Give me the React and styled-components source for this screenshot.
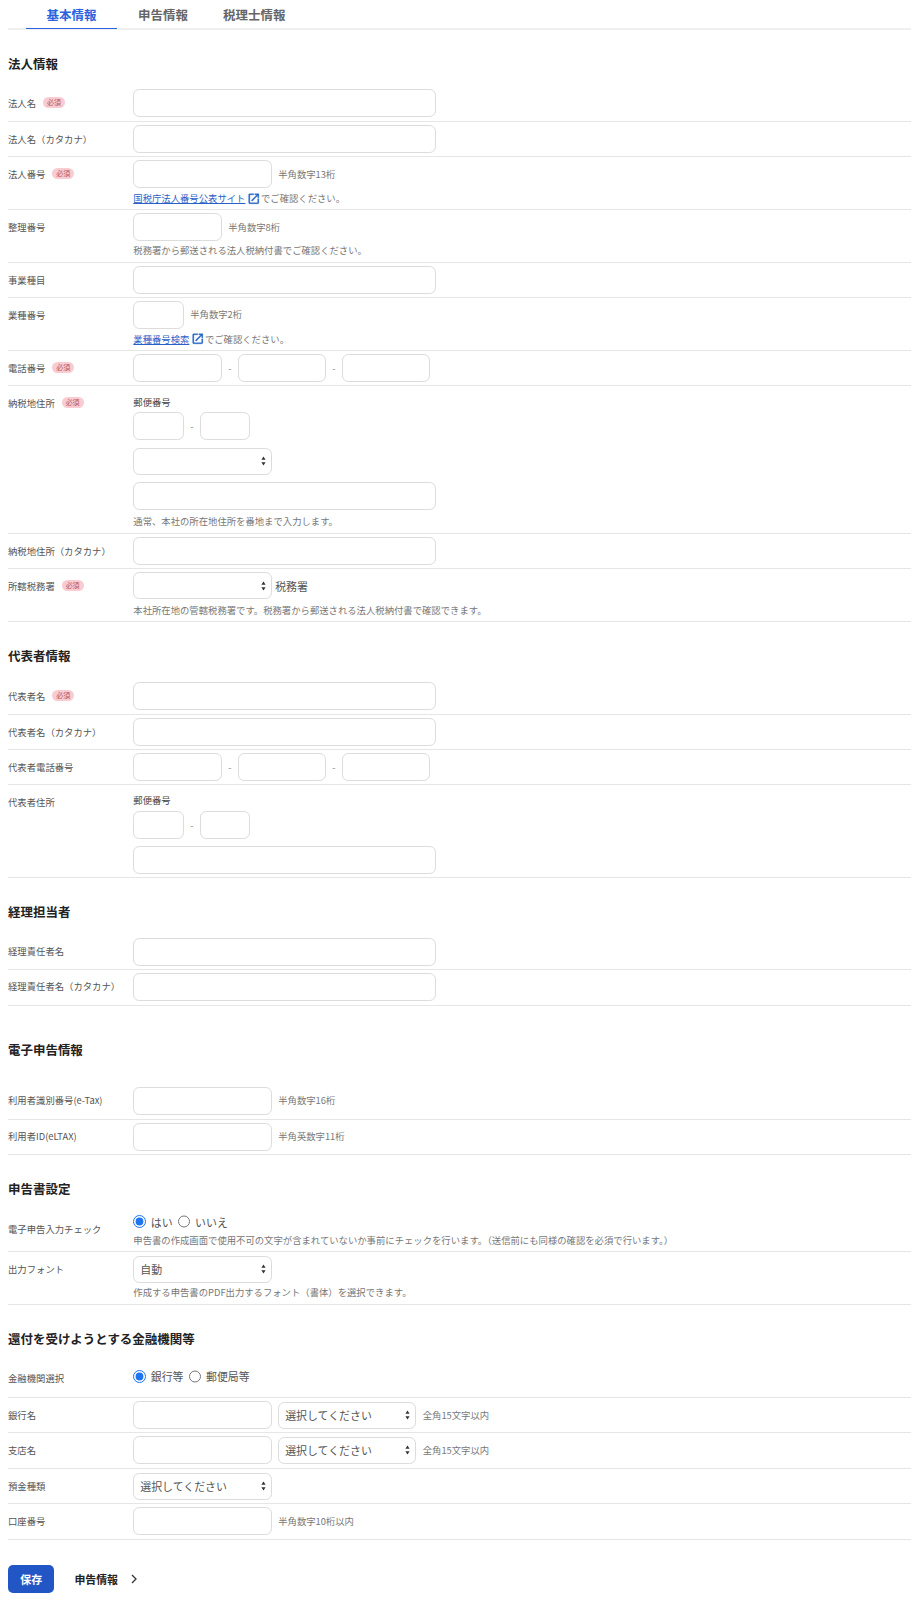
import React from "react";
import styled, { createGlobalStyle } from "styled-components";

const Global = createGlobalStyle`
  html, body { margin: 0; padding: 0; background: #fff; }
  body { font-family: "Noto Sans CJK JP", "Noto Sans", sans-serif; color: #555; }
  * { box-sizing: border-box; }
`;

const Page = styled.div`
  padding: 0 5px 0 8px;
`;

const TabBar = styled.nav`
  display: flex;
  height: 30px;
  padding-left: 18px;
  border-bottom: 2px solid #f0f0f0;
`;

const Tab = styled.div`
  height: 29.3px;
  padding: 6px 0 0;
  width: ${(p) => p.$w}px;
  text-align: ${(p) => (p.$active ? "center" : "left")};
  margin-left: ${(p) => p.$ml || 0}px;
  font-size: 12.48px;
  line-height: 19px;
  font-weight: 700;
  color: ${(p) => (p.$active ? "#2a62e0" : "#666")};
  border-bottom: ${(p) => (p.$active ? "1.5px solid #2a62e0" : "none")};
`;

const titlePadding = (p) => {
  if (p.$wide) return "35px 0 25px";
  if (p.$first) return "24.5px 0 13.7px";
  return "25px 0 13.7px";
};

const SectionTitle = styled.h2`
  margin: 0;
  padding: ${titlePadding};
  font-size: 12.48px;
  line-height: 18px;
  font-weight: 700;
  color: #222;
`;

const Row = styled.div`
  display: grid;
  grid-template-columns: 125.3px 1fr;
  padding: 3px 0 ${(p) => (p.$tall ? 4 : 3)}px;
  border-bottom: 1px solid #e6e6e6;
`;

const Label = styled.div`
  display: flex;
  align-items: center;
  gap: 7px;
  height: 15px;
  margin-top: ${(p) => (p.$low ? 7.5 : 6.8)}px;
  font-size: 9.36px;
  line-height: 15px;
  color: #555;
`;

const Badge = styled.span`
  display: inline-block;
  width: 21.8px;
  height: 11px;
  margin-top: -1px;
  border-radius: 6px;
  background: #f8ccd2;
  color: #b5565f;
  font-size: 7px;
  line-height: 11px;
  text-align: center;
`;

const Field = styled.div`
  display: flex;
  flex-direction: column;
  align-items: flex-start;
  min-width: 0;
`;

const Line = styled.div`
  display: flex;
  align-items: center;
  gap: ${(p) => p.$gap ?? 6.5}px;
`;

const Input = styled.input`
  display: block;
  width: ${(p) => p.$w || 302.4}px;
  height: 28px;
  padding: 0 8px;
  border: 1px solid #dcdcdc;
  border-radius: 6.24px;
  background: #fff;
  outline: none;
  font: inherit;
`;

const arrows =
  "url(\"data:image/svg+xml,%3Csvg xmlns='http://www.w3.org/2000/svg' width='5' height='10'%3E%3Cpath d='M2.5 0.5 L4.6 3.8 H0.4 Z M2.5 9.5 L4.6 6.2 H0.4 Z' fill='%23333'/%3E%3C/svg%3E\")";

const Select = styled.select`
  display: block;
  appearance: none;
  width: ${(p) => p.$w || 138.4}px;
  height: 27.3px;
  margin: 0.35px 0;
  padding: 0 12px 0 6px;
  border: 1px solid #dcdcdc;
  border-radius: 6.24px;
  background: #fff ${arrows} no-repeat right 5px center;
  outline: none;
  font-family: inherit;
  font-size: 10.92px;
  color: #555;
`;

const Dash = styled.span`
  font-size: 9.36px;
  color: #888;
  width: 16.3px;
  text-align: center;
`;

const Note = styled.span`
  font-size: 9.36px;
  line-height: 15px;
  color: #777;
`;

const Unit = styled.span`
  font-size: 10.92px;
  color: #555;
  margin-left: -3px;
`;

const Hint = styled.p`
  display: flex;
  align-items: center;
  margin: ${(p) => p.$top ?? 2}px 0 0;
  font-size: 9.36px;
  line-height: 16.3px;
  color: #777;
`;

const ExtLink = styled.a`
  color: #2a5fc8;
  text-decoration: underline;
`;

const ExtIcon = styled.svg`
  width: 13.5px;
  height: 13.5px;
  margin: 0 0.5px 0 1.5px;
  fill: #1d5fc4;
  stroke: #1d5fc4;
  stroke-width: 0.6;
`;

const ZipCaption = styled.div`
  padding-top: 2.5px;
  height: 22.8px;
  font-size: 9.36px;
  line-height: 20px;
  color: #444;
`;

const Stack = styled.div`
  display: flex;
  flex-direction: column;
  align-items: flex-start;
  gap: 7.3px;
`;

const RadioLine = styled.div`
  display: flex;
  align-items: center;
  height: ${(p) => (p.$loose ? 17 : 15)}px;
  margin: ${(p) => (p.$loose ? "3.5px 0 9.3px" : "0")};
`;

const RadioLabel = styled.label`
  display: inline-flex;
  align-items: center;
  margin-right: 5px;
  font-size: 10.92px;
  color: #555;
`;

const Radio = styled.input`
  width: 12.5px;
  height: 12.5px;
  margin: 0 5px 0 0;
  accent-color: #1f75f0;
`;

const Footer = styled.div`
  display: flex;
  align-items: center;
  margin-top: 24.7px;
`;

const SaveButton = styled.button`
  width: 46.4px;
  height: 28px;
  border: none;
  border-radius: 5px;
  background: #2356c5;
  color: #fff;
  font-family: inherit;
  font-size: 10.92px;
  font-weight: 700;
`;

const NextLink = styled.div`
  display: flex;
  align-items: center;
  gap: 13px;
  margin-left: 20px;
  font-size: 10.92px;
  font-weight: 700;
  color: #222;
`;

const Chevron = styled.svg`
  width: 6px;
  height: 10px;
  fill: none;
  stroke: #333;
  stroke-width: 1.3;
`;

const Required = () => <Badge>必須</Badge>;

const RowLabel = ({ children, required, low }) => (
  <Label $low={low}>
    {children}
    {required && <Required />}
  </Label>
);

const External = () => (
  <ExtIcon viewBox="0 0 24 24">
    <path d="M19 19H5V5h7V3H5a2 2 0 0 0-2 2v14a2 2 0 0 0 2 2h14c1.1 0 2-.9 2-2v-7h-2v7zM14 3v2h3.59l-9.83 9.83 1.41 1.41L19 6.41V10h2V3h-7z" />
  </ExtIcon>
);

const TelInputs = () => (
  <Line $gap={0}>
    <Input $w={88.4} />
    <Dash>-</Dash>
    <Input $w={87.7} />
    <Dash>-</Dash>
    <Input $w={87.7} />
  </Line>
);

const ZipInputs = () => (
  <Line $gap={0}>
    <Input $w={50.4} />
    <Dash>-</Dash>
    <Input $w={49.7} />
  </Line>
);

const TextRow = ({ label, required, tall }) => (
  <Row $tall={tall}>
    <RowLabel required={required}>{label}</RowLabel>
    <Field>
      <Input />
    </Field>
  </Row>
);

const NoteRow = ({ label, w = 138.4, note, tall }) => (
  <Row $tall={tall}>
    <RowLabel>{label}</RowLabel>
    <Field>
      <Line>
        <Input $w={w} />
        <Note>{note}</Note>
      </Line>
    </Field>
  </Row>
);

const BankRow = ({ label, tall }) => (
  <Row $tall={tall}>
    <RowLabel>{label}</RowLabel>
    <Field>
      <Line>
        <Input $w={138.4} />
        <Select $w={138}>
          <option>選択してください</option>
        </Select>
        <Note>全角15文字以内</Note>
      </Line>
    </Field>
  </Row>
);

export default function App() {
  return (
    <Page>
      <Global />
      <TabBar>
        <Tab $active $w={91}>基本情報</Tab>
        <Tab $ml={21} $w={85}>申告情報</Tab>
        <Tab $w={70}>税理士情報</Tab>
      </TabBar>

      <SectionTitle $first>法人情報</SectionTitle>
      <TextRow label="法人名" required tall />
      <TextRow label="法人名（カタカナ）" />
      <Row>
        <RowLabel required>法人番号</RowLabel>
        <Field>
          <Line>
            <Input $w={138.4} />
            <Note>半角数字13桁</Note>
          </Line>
          <Hint>
            <ExtLink>国税庁法人番号公表サイト</ExtLink>
            <External />
            でご確認ください。
          </Hint>
        </Field>
      </Row>
      <Row>
        <RowLabel>整理番号</RowLabel>
        <Field>
          <Line>
            <Input $w={88.4} />
            <Note>半角数字8桁</Note>
          </Line>
          <Hint $top={1}>税務署から郵送される法人税納付書でご確認ください。</Hint>
        </Field>
      </Row>
      <TextRow label="事業種目" />
      <Row>
        <RowLabel>業種番号</RowLabel>
        <Field>
          <Line>
            <Input $w={50.4} />
            <Note>半角数字2桁</Note>
          </Line>
          <Hint>
            <ExtLink>業種番号検索</ExtLink>
            <External />
            でご確認ください。
          </Hint>
        </Field>
      </Row>
      <Row>
        <RowLabel required>電話番号</RowLabel>
        <Field>
          <TelInputs />
        </Field>
      </Row>
      <Row>
        <RowLabel required>納税地住所</RowLabel>
        <Field>
          <ZipCaption>郵便番号</ZipCaption>
          <Stack>
            <ZipInputs />
            <Select />
            <Input />
          </Stack>
          <Hint $top={3}>通常、本社の所在地住所を番地まで入力します。</Hint>
        </Field>
      </Row>
      <TextRow label="納税地住所（カタカナ）" />
      <Row>
        <RowLabel required>所轄税務署</RowLabel>
        <Field>
          <Line>
            <Select />
            <Unit>税務署</Unit>
          </Line>
          <Hint>本社所在地の管轄税務署です。税務署から郵送される法人税納付書で確認できます。</Hint>
        </Field>
      </Row>

      <SectionTitle>代表者情報</SectionTitle>
      <TextRow label="代表者名" required tall />
      <TextRow label="代表者名（カタカナ）" />
      <Row>
        <RowLabel>代表者電話番号</RowLabel>
        <Field>
          <TelInputs />
        </Field>
      </Row>
      <Row>
        <RowLabel>代表者住所</RowLabel>
        <Field>
          <ZipCaption>郵便番号</ZipCaption>
          <Stack>
            <ZipInputs />
            <Input />
          </Stack>
        </Field>
      </Row>

      <SectionTitle>経理担当者</SectionTitle>
      <TextRow label="経理責任者名" />
      <TextRow label="経理責任者名（カタカナ）" tall />

      <SectionTitle $wide>電子申告情報</SectionTitle>
      <NoteRow label="利用者識別番号(e-Tax)" note="半角数字16桁" tall />
      <NoteRow label="利用者ID(eLTAX)" note="半角英数字11桁" />

      <SectionTitle>申告書設定</SectionTitle>
      <Row>
        <RowLabel low>電子申告入力チェック</RowLabel>
        <Field>
          <RadioLine>
            <RadioLabel>
              <Radio type="radio" name="check" defaultChecked />
              はい
            </RadioLabel>
            <RadioLabel>
              <Radio type="radio" name="check" />
              いいえ
            </RadioLabel>
          </RadioLine>
          <Hint $top={3}>申告書の作成画面で使用不可の文字が含まれていないか事前にチェックを行います。（送信前にも同様の確認を必須で行います。）</Hint>
        </Field>
      </Row>
      <Row>
        <RowLabel>出力フォント</RowLabel>
        <Field>
          <Select>
            <option>自動</option>
          </Select>
          <Hint $top={1}>作成する申告書のPDF出力するフォント（書体）を選択できます。</Hint>
        </Field>
      </Row>

      <SectionTitle>還付を受けようとする金融機関等</SectionTitle>
      <Row>
        <RowLabel>金融機関選択</RowLabel>
        <Field>
          <RadioLine $loose>
            <RadioLabel>
              <Radio type="radio" name="bank" defaultChecked />
              銀行等
            </RadioLabel>
            <RadioLabel>
              <Radio type="radio" name="bank" />
              郵便局等
            </RadioLabel>
          </RadioLine>
        </Field>
      </Row>
      <BankRow label="銀行名" />
      <BankRow label="支店名" tall />
      <Row>
        <RowLabel>預金種類</RowLabel>
        <Field>
          <Select>
            <option>選択してください</option>
          </Select>
        </Field>
      </Row>
      <NoteRow label="口座番号" note="半角数字10桁以内" tall />

      <Footer>
        <SaveButton>保存</SaveButton>
        <NextLink>
          申告情報
          <Chevron viewBox="0 0 6 10">
            <path d="M1 1l4 4-4 4" />
          </Chevron>
        </NextLink>
      </Footer>
    </Page>
  );
}
